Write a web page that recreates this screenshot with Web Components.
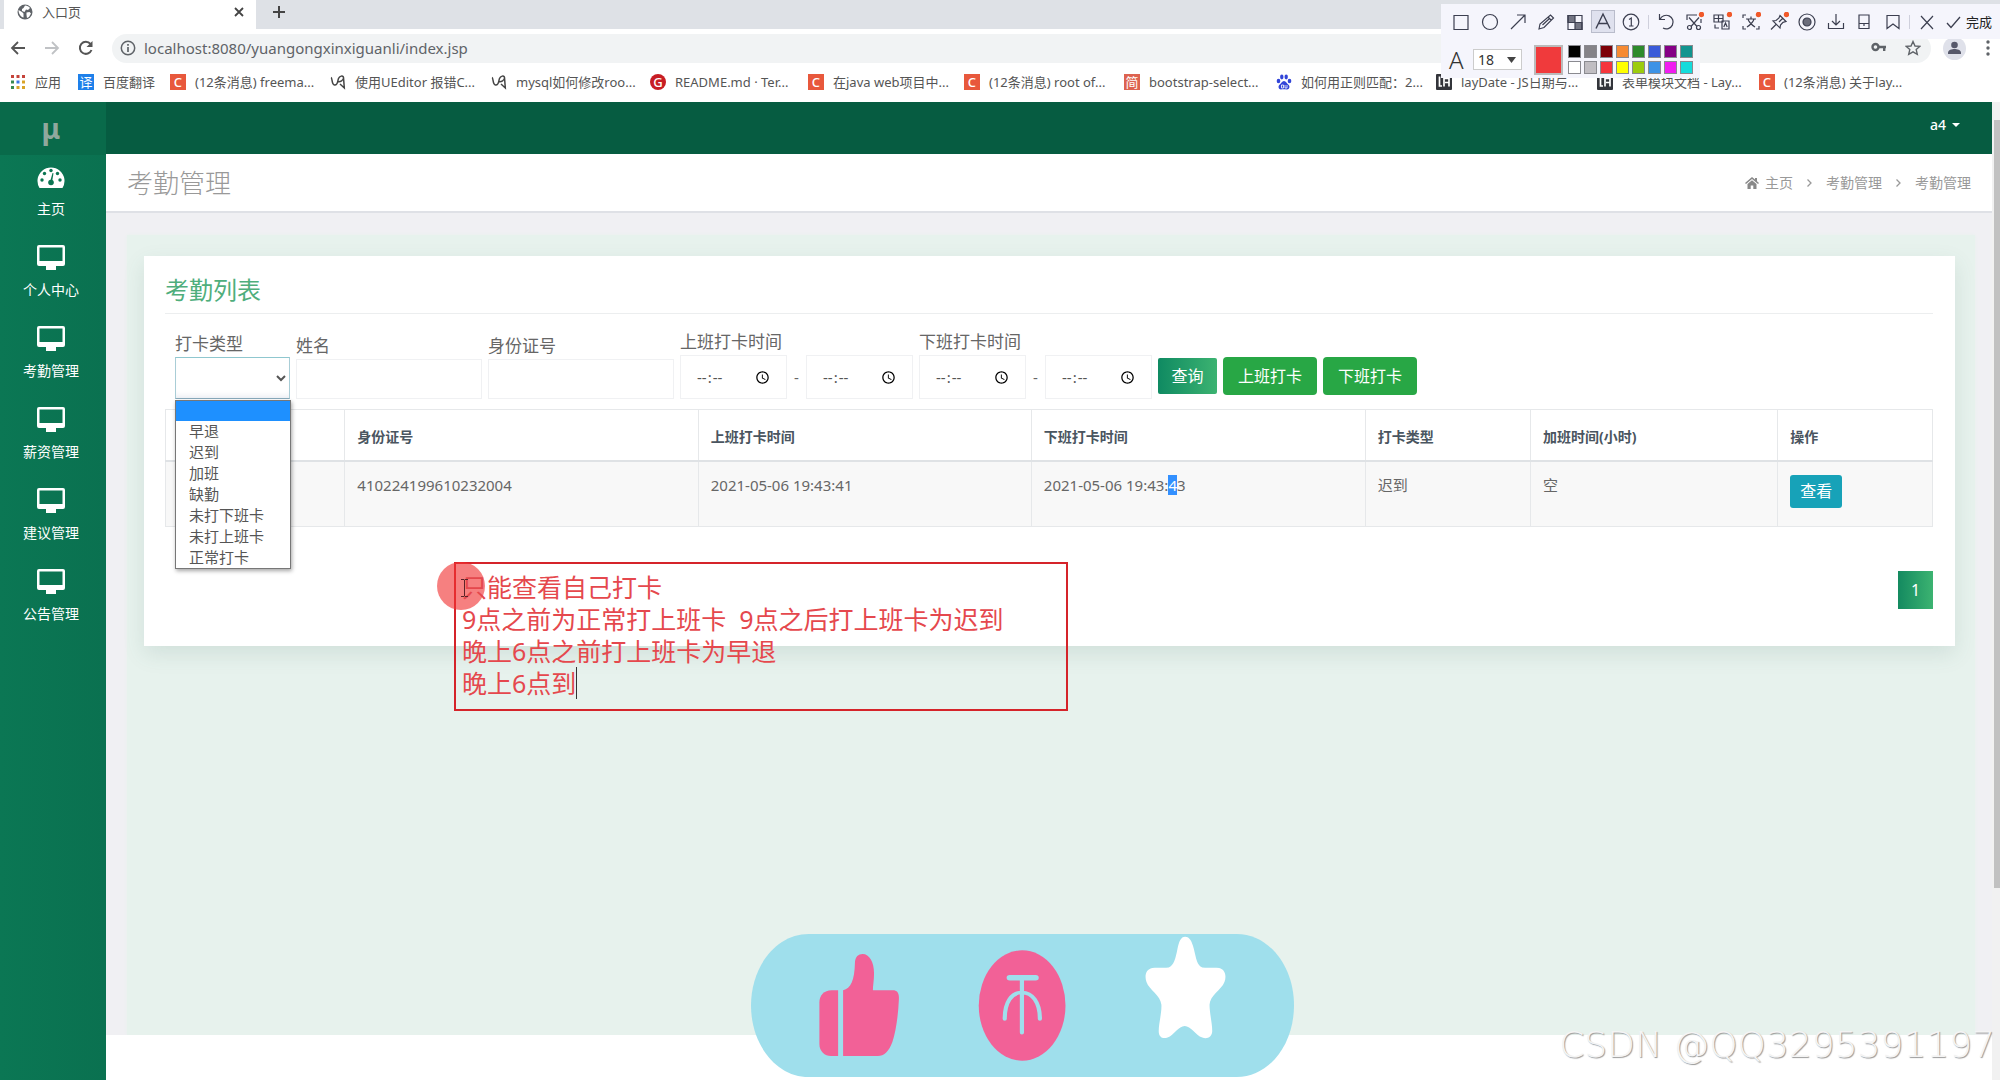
<!DOCTYPE html>
<html lang="zh-CN">
<head>
<meta charset="utf-8">
<title>入口页</title>
<style>
html,body{margin:0;height:100%}
body{font-family:"Noto Sans","Noto Sans CJK SC",sans-serif;font-size:15px;color:#666;background:#fff;overflow:hidden;position:relative}
</style>
</head>
<body>
<app-shell></app-shell>
<snip-toolbar></snip-toolbar>
<note-box></note-box>
<like-banner></like-banner>
<water-mark>CSDN @QQ3295391197</water-mark>
<script>
function define(name, html) {
  const t = document.createElement('template');
  t.innerHTML = '<style>*{box-sizing:border-box}a{color:inherit;text-decoration:none}button,input,select{font:inherit;margin:0}svg{display:block;flex:none}</style>' + html;
  customElements.define(name, class extends HTMLElement {
    constructor() {
      super();
      this.attachShadow({mode: 'open'}).appendChild(t.content.cloneNode(true));
    }
  });
}

/* ---------- browser window ---------- */
define('tab-strip', `
<style>
:host{display:flex;height:29px;background:#dee1e6;padding-left:4px;align-items:stretch}
.tab{width:252px;background:#fff;display:flex;align-items:center;padding:0 10px 6px 13px;gap:9px;font-size:13px;line-height:20px;color:#555}
.tab span{flex:1}
button{border:0;background:none;padding:0 0 6px;display:flex;align-items:center}
.tab button{padding:0}
.new{margin-left:16px}
</style>
<div class="tab">
<svg width="16" height="16" viewBox="0 0 16 16"><circle cx="8" cy="8" r="7.5" fill="#5f6368"/><path d="M1.500 6l3.500 2 1.500 1.500v4C4 13 1.500 10 1.500 6zM8 1.500c2 0 4 1 5 2.500l-2 2-2-.5L7.500 8 5 7V5l1.500-1z" fill="#fff"/><path d="M9.500 8.500l3-.5 1.500 1.500-2 3.500-2 1-.5-3z" fill="#fff"/></svg>
<span>入口页</span>
<button aria-label="关闭"><svg width="14" height="14" viewBox="0 0 14 14"><path d="M3 3l8 8M11 3l-8 8" stroke="#444" stroke-width="1.800"/></svg></button>
</div>
<button class="new" aria-label="新标签页"><svg width="14" height="14" viewBox="0 0 14 14"><path d="M7 1v12M1 7h12" stroke="#444" stroke-width="2"/></svg></button>
`);

define('address-bar', `
<style>
:host{display:flex;height:38px;align-items:center;padding:0 10px 0 10px;background:#fff}
.i{width:34px;display:flex;border:0;background:none;padding:0}
.box{flex:1;height:29px;border-radius:15px;background:#f1f3f4;display:flex;align-items:center;padding:0 10px 0 8px;gap:8px}
input{flex:1;border:0;background:none;outline:0;font-size:15px;color:#5f6368;padding:0;line-height:20px}
.end{display:flex;gap:18px}
.me{margin:0 20px 0 12px}
</style>
<button class="i" aria-label="后退"><svg width="16" height="16" viewBox="0 0 16 16"><path d="M15 8H2M8 2L2 8l6 6" fill="none" stroke="#555" stroke-width="1.800"/></svg></button>
<button class="i" aria-label="前进"><svg width="16" height="16" viewBox="0 0 16 16"><path d="M1 8h13M8 2l6 6-6 6" fill="none" stroke="#c0c2c5" stroke-width="1.800"/></svg></button>
<button class="i" aria-label="刷新"><svg width="16" height="16" viewBox="0 0 16 16"><path d="M13.5 10A6 6 0 1 1 12.5 4" fill="none" stroke="#555" stroke-width="2"/><path d="M14.5 1v6h-6z" fill="#555"/></svg></button>
<div class="box">
<svg width="16" height="16" viewBox="0 0 16 16"><circle cx="8" cy="8" r="6.7" fill="none" stroke="#5f6368" stroke-width="1.5"/><path d="M8 7v5M8 4v1.7" stroke="#5f6368" stroke-width="1.7"/></svg>
<input aria-label="地址" value="localhost:8080/yuangongxinxiguanli/index.jsp">
<div class="end">
<svg width="16" height="16" viewBox="0 0 16 16"><circle cx="4.5" cy="7" r="3" fill="none" stroke="#5f6368" stroke-width="2.4"/><path d="M7 7h8M13.200 7v4" stroke="#5f6368" stroke-width="2.4"/></svg>
<svg width="16" height="16" viewBox="0 0 16 16"><path d="M8 1.5l2 4.5 4.8.4-3.6 3.2 1.1 4.8L8 11.9l-4.3 2.5 1.1-4.8L1.200 6.400 6 6z" fill="none" stroke="#5f6368" stroke-width="1.4"/></svg>
</div>
</div>
<svg class="me" width="23" height="23" viewBox="0 0 23 23"><circle cx="11.500" cy="11.500" r="11.500" fill="#dfe1ea"/><circle cx="11.500" cy="8" r="3.300" fill="#56586a"/><path d="M5 17v-1.500c0-2.500 4-3.500 6.500-3.500s6.500 1 6.500 3.500V17z" fill="#56586a"/></svg>
<svg width="4" height="16" viewBox="0 0 4 16"><g fill="#5f6368"><circle cx="2" cy="2" r="1.700"/><circle cx="2" cy="8" r="1.700"/><circle cx="2" cy="14" r="1.700"/></g></svg>
`);

define('book-mark', `
<style>
:host{display:block;min-width:0}
a{display:flex;align-items:center;gap:9px;font-size:13px;line-height:20px;color:#555;white-space:nowrap}
.ic{width:16px;height:16px;flex:none;display:flex}
::slotted(b){width:16px;height:16px;font-size:13px;line-height:16px;text-align:center;color:#fff;font-weight:400}
</style>
<a href="#"><span class="ic"><slot name="icon"></slot></span><slot></slot></a>
`);

const SWASH = '<svg slot="icon" width="16" height="16" viewBox="0 0 16 16"><path d="M1 3.500c1.500.5.500 7 3.500 7.500C8 11.500 7.500 7 8.500 4.500 9.500 2 13 1 13.500 3.500 14 6 10 8.500 7.500 7.500M13.500 3.500l.8 10.500-4.300-4" fill="none" stroke="#444" stroke-width="1.500"/></svg>';
const LAYUI = '<svg slot="icon" width="16" height="16" viewBox="0 0 16 16"><rect width="16" height="16" rx="1" fill="#33353b"/><path d="M3.500 2.500V12H6M8 12.500v-8h5v4H9M13 8v4.500" fill="none" stroke="#fff" stroke-width="1.700"/></svg>';

define('bookmark-bar', `
<style>
:host{display:grid;grid-template-columns:68px 92px 160px 161px 159px 158px 156px 160px 152px 160px 161px 162px 1fr;align-items:center;height:35px;padding:0 0 6px 10px;background:#fff}
.c{background:#e8583c}.y{background:#1e80ea}.j{background:#dd6350}.g{background:#c71d23;border-radius:50%}
.c,.g{font-weight:500}
</style>
<book-mark><svg slot="icon" width="16" height="16" viewBox="0 0 16 16"><path d="M1 1h3v3H1zM6.500 1h3v3h-3zM12 1h3v3h-3z" fill="#c5433a"/><path d="M1 6.500h3v3H1z" fill="#3a8a50"/><path d="M6.500 6.500h3v3h-3z" fill="#3b78e7"/><path d="M12 6.500h3v3h-3zM12 12h3v3h-3zM6.500 12h3v3h-3z" fill="#d9a428"/><path d="M1 12h3v3H1z" fill="#3a8a50"/></svg>应用</book-mark>
<book-mark><b slot="icon" class="y">译</b>百度翻译</book-mark>
<book-mark><b slot="icon" class="c">C</b>(12条消息) freema...</book-mark>
<book-mark>${SWASH}使用UEditor 报错C...</book-mark>
<book-mark>${SWASH}mysql如何修改roo...</book-mark>
<book-mark><b slot="icon" class="g">G</b>README.md · Ter...</book-mark>
<book-mark><b slot="icon" class="c">C</b>在java web项目中...</book-mark>
<book-mark><b slot="icon" class="c">C</b>(12条消息) root of...</book-mark>
<book-mark><b slot="icon" class="j">简</b>bootstrap-select...</book-mark>
<book-mark><svg slot="icon" width="16" height="16" viewBox="0 0 16 16"><g fill="#3245d8"><ellipse cx="2.500" cy="7" rx="1.800" ry="2.300"/><ellipse cx="5.800" cy="3" rx="1.700" ry="2.400"/><ellipse cx="10.200" cy="3" rx="1.700" ry="2.400"/><ellipse cx="13.500" cy="7" rx="1.800" ry="2.300"/><path d="M8 7c2 0 3 2.500 4.500 3.800 2 2 .6 4.800-1.500 4.700-2 0-4-.5-6 0-2.100.1-3.500-2.700-1.500-4.700C5 9.500 6 7 8 7z"/></g><path d="M5.500 11h2v3h-2zM9 11v3h2v-3" fill="none" stroke="#fff" stroke-width=".8"/></svg>如何用正则匹配：2...</book-mark>
<book-mark>${LAYUI}layDate - JS日期与...</book-mark>
<book-mark>${LAYUI}表单模块文档 - Lay...</book-mark>
<book-mark><b slot="icon" class="c">C</b>(12条消息) 关于lay...</book-mark>
`);

/* ---------- application ---------- */
define('nav-item', `
<style>
:host{display:block;height:81px}
a{display:flex;flex-direction:column;align-items:center;gap:8px;color:#fff;font-size:14px;line-height:20px;padding:8px 4px 0 0}
.ic{height:28px;display:flex;align-items:center}
</style>
<a href="#"><span class="ic"><slot name="icon"></slot></span><slot></slot></a>
`);

const MONITOR = '<svg slot="icon" width="30" height="26" viewBox="0 0 30 26"><path d="M3 0h24a2 2 0 0 1 2 2v17a2 2 0 0 1-2 2h-7v4H10v-4H3a2 2 0 0 1-2-2V2a2 2 0 0 1 2-2zM3.500 2.500V16h23V2.500z" fill="#fff" fill-rule="evenodd"/></svg>';

define('side-nav', `
<style>
:host{display:block;width:106px;background:linear-gradient(90deg,#0b7754,#0a7150)}
.logo{height:53px;background:#096a4a;display:flex;align-items:center;justify-content:center;padding:0 4px 2px 0;font-size:28px;line-height:40px;font-weight:700;color:#8fa89d}
</style>
<div class="logo">μ</div>
<nav>
<nav-item><svg slot="icon" width="28" height="22" viewBox="0 0 28 22"><path d="M2.500 22A13.500 13.500 0 1 1 25.500 22z" fill="#fff"/><g fill="#0b7552"><circle cx="5" cy="14" r="1.700"/><circle cx="7.500" cy="7.500" r="1.700"/><circle cx="14" cy="4.500" r="1.700"/><circle cx="20.500" cy="7.500" r="1.700"/><circle cx="23" cy="14" r="1.700"/><circle cx="14" cy="16.500" r="2.800"/><path d="M13 16l2.500-9 1 .3-1.500 9z"/></g></svg>主页</nav-item>
<nav-item>${MONITOR}个人中心</nav-item>
<nav-item>${MONITOR}考勤管理</nav-item>
<nav-item>${MONITOR}薪资管理</nav-item>
<nav-item>${MONITOR}建议管理</nav-item>
<nav-item>${MONITOR}公告管理</nav-item>
</nav>
`);

define('top-bar', `
<style>
:host{display:flex;height:52px;background:#065c41;justify-content:flex-end;align-items:center;padding:0 32px 6px 0}
button{border:0;background:none;color:#fff;font-size:14px;line-height:20px;font-weight:500;padding:0;display:flex;align-items:center;gap:6px}
</style>
<button>a4 <svg width="8" height="4" viewBox="0 0 8 4"><path d="M0 0h8L4 4z" fill="#fff"/></svg></button>
`);

define('title-bar', `
<style>
:host{display:flex;height:59px;background:#fff;border-bottom:2px solid #dfe1e6;align-items:center;justify-content:space-between;padding:0 21px}
h1{margin:0;font-size:26px;line-height:36px;font-weight:300;color:#999}
nav{display:flex;align-items:center;font-size:14px;line-height:20px;color:#999;gap:14px}
a{display:flex;align-items:center;gap:6px}
</style>
<h1>考勤管理</h1>
<nav>
<a href="#"><svg width="14" height="12" viewBox="0 0 14 12"><path d="M7 0l3 2.600V1h2v3.300L14 6l-1 1-6-5-6 5-1-1z M2.500 7L7 3.300 11.500 7v5H8.300V8.500H5.700V12H2.500z" fill="#888"/></svg>主页</a>
<svg width="5" height="8" viewBox="0 0 5 8"><path d="M.5.5L4 4 .5 7.500" fill="none" stroke="#999" stroke-width="1.300"/></svg>
<a href="#">考勤管理</a>
<svg width="5" height="8" viewBox="0 0 5 8"><path d="M.5.5L4 4 .5 7.500" fill="none" stroke="#999" stroke-width="1.300"/></svg>
<a href="#">考勤管理</a>
</nav>
`);

define('option-menu', `
<style>
:host{display:block;background:#fff;border:1px solid #777;box-shadow:1px 2px 4px rgba(0,0,0,.35)}
ul{list-style:none;margin:0;padding:0;font-size:15px;line-height:20px;color:#555}
li{height:21px;padding-left:13px}
li:first-child{background:#1e90ff;height:20px}
</style>
<ul role="listbox"><li role="option" aria-label="全部"></li><li role="option">早退</li><li role="option">迟到</li><li role="option">加班</li><li role="option">缺勤</li><li role="option">未打下班卡</li><li role="option">未打上班卡</li><li role="option">正常打卡</li></ul>
`);

define('filter-bar', `
<style>
:host{display:flex;align-items:flex-end;gap:6px;height:76px;padding-left:10px}
.f{display:flex;flex-direction:column;position:relative}
label{font-size:17px;line-height:26px;color:#666;white-space:nowrap}
input,select{border:1px solid #f0f1f3;background:#fff;color:#555;outline:0}
.text{width:186px;height:40px;padding:0 10px}
select{width:115px;height:42px;border-color:#8fc7cf #a9cdd6 #8ab;box-shadow:inset 0 -6px 6px -4px #e8ecf2}
option-menu{position:absolute;left:0;top:69px;width:116px;z-index:3}
.pair{display:flex;align-items:center}
.pair i{width:19px;text-align:center;font-style:normal;font-size:15px}
.pair input{width:107px;height:44px;padding:0 16px 0 15px;font-size:15px}
input::-webkit-datetime-edit-ampm-field{display:none}
input::-webkit-calendar-picker-indicator{margin-left:0;width:15px;height:15px;padding:0}
button{height:38px;width:94px;border:0;border-radius:4px;background:#28a745;color:#fff;font-size:16px;line-height:24px;padding:0;margin-bottom:4px}
.q{width:59px;height:36px;border-radius:2px;background:linear-gradient(90deg,#0f8a62,#3cb371);margin-bottom:5px}
</style>
<div class="f"><label for="type">打卡类型</label><select id="type"><option></option><option>早退</option><option>迟到</option><option>加班</option><option>缺勤</option><option>未打下班卡</option><option>未打上班卡</option><option>正常打卡</option></select><option-menu></option-menu></div>
<div class="f"><label for="name">姓名</label><input class="text" id="name"></div>
<div class="f"><label for="idno">身份证号</label><input class="text" id="idno"></div>
<div class="f"><label for="on">上班打卡时间</label><div class="pair"><input type="time" id="on"><i>-</i><input type="time" aria-label="上班打卡时间止"></div></div>
<div class="f"><label for="off">下班打卡时间</label><div class="pair"><input type="time" id="off"><i>-</i><input type="time" aria-label="下班打卡时间止"></div></div>
<button class="q">查询</button><button>上班打卡</button><button>下班打卡</button>
`);

define('record-table', `
<style>
:host{display:block}
table{width:100%;border-collapse:collapse;table-layout:fixed;font-size:15px;line-height:22px;color:#666}
th,td{border:1px solid #e6e8ea;text-align:left;padding:0 12px}
th{height:51px;font-weight:700;color:#4a5560;border-bottom:2px solid #dfe2e5;padding-top:4px;font-size:14px}
td{height:66px;vertical-align:top;padding-top:12px;background:#f8f8f8}
td:last-child{padding-top:13px}
mark{background:#3390ff;color:#fff}
button{width:52px;height:33px;border:0;border-radius:3px;background:#17a2b8;color:#fff;font-size:16px;line-height:24px;padding:0;display:block}
</style>
<table>
<colgroup><col style="width:10.150%"><col style="width:20%"><col style="width:18.850%"><col style="width:18.900%"><col style="width:9.350%"><col style="width:14%"><col></colgroup>
<thead><tr><th aria-label="姓名"></th><th>身份证号</th><th>上班打卡时间</th><th>下班打卡时间</th><th>打卡类型</th><th>加班时间(小时)</th><th>操作</th></tr></thead>
<tbody><tr><td></td><td>410224199610232004</td><td>2021-05-06 19:43:41</td><td>2021-05-06 19:43:<mark>4</mark>3</td><td>迟到</td><td>空</td><td><button>查看</button></td></tr></tbody>
</table>
`);

define('record-card', `
<style>
:host{display:block;background:#fff;padding:18px 22px 37px 21px;box-shadow:0 8px 20px rgba(60,110,100,.13)}
h2{margin:0;padding-bottom:7px;border-bottom:1px solid #eceeef;font-size:24px;line-height:32px;font-weight:400;color:#4fae7c}
filter-bar{margin:9px 0 10px}
.pages{display:flex;justify-content:flex-end;margin-top:44px}
.pages a{width:35px;height:38px;background:linear-gradient(90deg,#148a60,#3cb371);color:#fff;font-size:16px;line-height:38px;text-align:center}
</style>
<h2>考勤列表</h2>
<filter-bar></filter-bar>
<record-table></record-table>
<nav class="pages" aria-label="分页"><a href="#">1</a></nav>
`);

define('page-scroll', `
<style>
:host{display:block;width:8px;background:#f1f1f1;padding:18px 0 0 2px}
div{height:80%;background:#c1c1c1}
</style><div></div>
`);

define('app-shell', `
<style>
:host{display:flex;flex-direction:column;height:100vh}
.app{flex:1;display:flex;min-height:0}
.main{flex:1;display:flex;flex-direction:column;min-width:0}
.body{flex:1;background:#f0f0f3;padding:22px 17px 0 21px;display:flex}
.panel{flex:1;background:#e7f2ed;padding:21px 20px 0 17px;box-shadow:0 0 3px #e7f2ed}
.foot{height:45px;background:#fff;position:relative}
</style>
<tab-strip></tab-strip>
<address-bar></address-bar>
<bookmark-bar></bookmark-bar>
<div class="app">
<side-nav></side-nav>
<div class="main">
<top-bar></top-bar>
<title-bar></title-bar>
<div class="body"><div class="panel"><record-card></record-card></div></div>
<div class="foot"></div>
</div>
<page-scroll></page-scroll>
</div>
`);

/* ---------- floating layers ---------- */
const ic = (label, body) => `<button aria-label="${label}"><svg width="20" height="20" viewBox="0 0 20 20" fill="none" stroke="#3c3f50" stroke-width="1.200">${body}</svg></button>`;
const dot = '<circle cx="17.500" cy="2.500" r="2.700" fill="#f0592a" stroke="none"/>';
const top8 = ['#000','#858388','#7d0008','#f68a33','#2e8a2c','#3a5bd9','#850086','#129490'];
const low8 = ['#fff','#c0bdc2','#f5353c','#ffff00','#9ccc0e','#3d92e6','#f01cf0','#15dcdc'];

define('snip-toolbar', `
<style>
:host{position:absolute;top:4px;right:0;width:559px;z-index:5}
.r1{height:35px;background:#f5f5fc;display:flex;align-items:center;padding:0 8px 0 6px}
.r1 button{border:0;background:none;padding:0;height:22px;display:flex;align-items:center;justify-content:center;flex:1 1 0}
.on svg{background:#dfe1ee;outline:1px solid #b9bccb}
.sep{width:1px;height:14px;background:#cfd0dc;margin:0 3px 0 2px}
.r1 .done{flex:none;width:51px;gap:5px;font-size:13px;line-height:20px;color:#222;justify-content:flex-end;white-space:nowrap}
.r2{width:259px;height:39px;background:#f5f5fc;display:flex;align-items:center;padding:2px 0 0 8px}
.a{width:24px;font-size:24px;line-height:28px;font-weight:300;color:#333}
.size{position:relative;display:flex}
.size svg{position:absolute;right:6px;top:8px;pointer-events:none}
select{appearance:none;width:49px;height:21px;border:1px solid #ccc;background:#fff;font-size:14px;line-height:19px;color:#333;padding:0 0 0 4px;outline:0;border-radius:0}
.cur{width:29px;height:30px;background:#f03a3c;border:2px solid #bbb;margin:0 5px 0 12px}
.sw{display:grid;grid-template-columns:repeat(8,13px);gap:3px}
.sw span{height:13px;border:1px solid #8a8a90}
</style>
<div class="r1">
${ic('矩形','<path d="M3 3.500h14v14H3z"/>')}
${ic('圆形','<circle cx="10" cy="10" r="7.500"/>')}
${ic('箭头','<path d="M3 17L17 3M9 3h8v8"/>')}
${ic('画笔','<path d="M3 17l1-5L14.500 3l3 3L8 15.500zM12 5l3 3M6.500 13l7-6.500"/>')}
${ic('马赛克','<path d="M3 3.500h14v14H3z"/><path d="M3 3.500h7v7H3zM10 10.500h7v7h-7z" fill="#3c3f50" fill-opacity=".7"/>')}
<button class="on" aria-label="文字"><svg width="22" height="21" viewBox="0 0 22 21"><path d="M4 17.500L11 3l7 14.500M6.500 12.500h9" fill="none" stroke="#3c3f50" stroke-width="1.400"/></svg></button>
${ic('序号','<circle cx="10" cy="10" r="7.800"/><path d="M8 7.500L10.300 6v8M8 14h4.500"/>')}
<span class="sep"></span>
${ic('撤销','<path d="M3.500 2v5.500H9M4 7.500A6.800 6.800 0 1 1 7 16"/>')}
${ic('裁剪','<path d="M3 8V3h10M17 7v4M5 5.500l8 9M15 5.500l-8 9"/><circle cx="5.500" cy="15.500" r="2"/><circle cx="14.500" cy="15.500" r="2"/>'+dot)}
${ic('翻译','<path d="M2 3h9v7H2zM2 6.500h9M6.500 3v7M10 9h7v8h-7zM11.800 15l1.700-4 1.700 4M3 12.500V16h4"/>'+dot)}
${ic('识别','<path d="M2 6V3h3M2 14v3h3M15 17h3v-3M5 7h10M10 4.500V7M7 7c1 4 4 6 7 8M13 7c-1 4-4 6-7 8"/>'+dot)}
${ic('固定','<path d="M11 3.500l6 6-3 .8-2.500 2.700-.5 3-7-7 3-.5L10 6zM7 12.500l-5 5M14 6l-4 4"/>'+dot)}
${ic('录制','<circle cx="10" cy="10" r="8"/><circle cx="10" cy="10" r="4" fill="#3c3f50" fill-opacity=".75"/>')}
${ic('下载','<path d="M10 2v11M6 9l4 4 4-4M2.500 11v5.500h15V11"/>')}
${ic('手机','<path d="M5 3h10v13.500H5zM5 11.500h10M10 11.500V14"/>')}
${ic('收藏','<path d="M4 3.500h12v13l-6-4.500-6 4.500z"/>')}
<span class="sep"></span>
${ic('取消','<path d="M4 4l12 13M16 4L4 17"/>')}
<button class="done"><svg width="15" height="14" viewBox="0 0 15 14"><path d="M1 8l4 4.500L14 2" fill="none" stroke="#3c3f50" stroke-width="1.300"/></svg>完成</button>
</div>
<div class="r2"><span class="a">A</span><span class="size"><select aria-label="字号"><option>18</option></select><svg width="9" height="6" viewBox="0 0 9 6"><path d="M0 0h9L4.500 6z" fill="#444"/></svg></span><span class="cur"></span>
<div class="sw">${top8.concat(low8).map(c => `<span style="background:${c}"></span>`).join('')}</div></div>
`);

define('note-box', `
<style>
:host{position:absolute;left:454px;top:562px;width:614px;height:149px;border:2px solid #d5242a;z-index:4;padding:7px 6px;box-sizing:border-box}
p{margin:0;font-size:25px;line-height:32px;color:#e5484d;white-space:pre;position:relative}
.halo{position:absolute;left:-19px;top:-2px;width:48px;height:48px;border-radius:50%;background:rgba(240,50,50,.62)}
.beam{position:absolute;left:5px;top:15px}
.caret{display:inline-block;width:1px;height:32px;background:#333;vertical-align:top}
</style>
<span class="halo"></span>
<p>只能查看自己打卡</p><p>9点之前为正常打上班卡  9点之后打上班卡为迟到</p><p>晚上6点之前打上班卡为早退</p><p>晚上6点到<span class="caret"></span></p>
<svg class="beam" width="7" height="18" viewBox="0 0 7 18"><path d="M0 .5h3l.5 1 .5-1h3M3.500 1v16M0 17.500h3l.5-1 .5 1h3" fill="none" stroke="#5b2328"/></svg>
`);

define('like-banner', `
<style>
:host{position:absolute;left:751px;top:934px;width:543px;height:143px;z-index:4}
svg{width:100%;height:100%}
</style>
<svg viewBox="54 43 1421 428" preserveAspectRatio="none">
<path d="M205 43H1325C1410 43 1475 140 1475 257S1410 471 1325 471H205C120 471 54 374 54 257S120 43 205 43z" fill="#9fdfec"/>
<path d="M282 211h-17c-20 0-32 16-32 36v125c0 22 14 36 30 36h19z" fill="#f26197"/>
<path d="M295 211c20-4 30-30 31-82 1-18 9-26 20-26 18 0 30 24 30 58 0 20-3 38-3 50h52c12 0 17 8 16 28-2 50-8 96-17 127-10 30-22 42-38 42h-91z" fill="#f26197"/>
<ellipse cx="763.500" cy="257" rx="113.500" ry="165" fill="#f26197"/>
<path d="M731 174h68" fill="none" stroke="#9fdfec" stroke-width="16" stroke-linecap="round"/>
<path d="M763 176v162M718 297c0-50 18-79 45-79s47 29 47 79" fill="none" stroke="#9fdfec" stroke-width="11" stroke-linecap="round"/>
<path d="M1190 51c12 0 18 14 23 37 6 28 8 50 22 55 16 3 30-1 44 2 16 4 20 24 14 42-8 24-38 40-39 68 0 26 7 54 7 79-1 19-14 24-26 19-18-8-30-35-46-35s-28 27-45 35c-13 5-23-2-23-19 0-25 8-53 7-79-2-28-32-44-39-68-6-20-1-38 15-42 14-3 28 1 43-2 14-5 18-27 23-55 4-23 9-37 20-37z" fill="#fff"/>
</svg>
`);

define('water-mark', `
<style>
:host{position:absolute;right:5px;bottom:13px;z-index:6;font:200 36px/44px "DejaVu Sans Light","DejaVu Sans",sans-serif;color:#f4f4f4;text-shadow:1px 1px 1px #999;white-space:nowrap}
</style><slot></slot>
`);
</script>
</body>
</html>
